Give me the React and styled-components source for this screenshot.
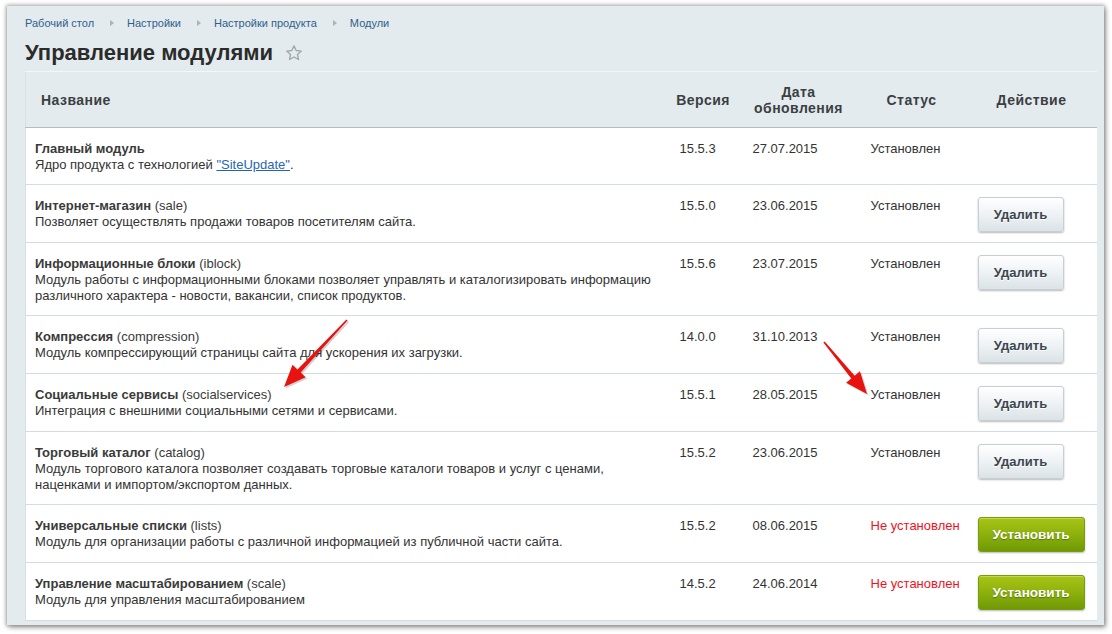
import React from "react";
import styled, { createGlobalStyle } from "styled-components";

const Global = createGlobalStyle`
  html, body { margin: 0; padding: 0; background: #fff; }
  body { font-family: "Liberation Sans", Arial, sans-serif; }
`;

const Outer = styled.div`
  width: 1112px;
  height: 634px;
  padding: 6px 8px 9px 7px;
  box-sizing: border-box;
  position: relative;
`;

const Panel = styled.div`
  height: 619px;
  background: #e3ebee;
  box-shadow: 0 0 4px 1px rgba(0, 0, 0, 0.35), 2px 3px 5px rgba(0, 0, 0, 0.25);
  padding: 9px 8px 0 18px;
  box-sizing: border-box;
  overflow: hidden;
  display: flex;
  flex-direction: column;
`;

const Crumbs = styled.nav`
  display: flex;
  align-items: center;
  height: 16px;
  font-size: 11px;
  color: #2f5f8d;
`;

const Crumb = styled.span`
  white-space: nowrap;
`;

const Sep = styled.span`
  display: inline-block;
  width: 0;
  height: 0;
  border-top: 3px solid transparent;
  border-bottom: 3px solid transparent;
  border-left: 4px solid #a9b3b8;
  margin: 0 13px 0 16px;
`;

const TitleRow = styled.div`
  display: flex;
  align-items: center;
  margin-top: 7px;
  height: 30px;
  gap: 12px;
`;

const Title = styled.h1`
  margin: 0;
  font-size: 22px;
  font-weight: bold;
  color: #2b2b2b;
`;

const Table = styled.table`
  margin-top: 3px;
  width: 1071px;
  border-collapse: collapse;
  background: #fff;
  table-layout: fixed;
  border-left: 1px solid #d7e0e4;
`;

const Th = styled.th`
  background: #e3ebee;
  height: 56px;
  box-sizing: border-box;
  padding: 0 4px;
  font-size: 14px;
  letter-spacing: 0.45px;
  line-height: 16px;
  font-weight: bold;
  color: #3b3f42;
  text-align: ${(p) => (p.$left ? "left" : "center")};
  padding-left: ${(p) => (p.$left ? "15px" : "6px")};
  border-bottom: 1px solid #b4bcc0;
  border-top: 1px solid #f4f7f8;
`;

const Tr = styled.tr`
  border-bottom: 1px solid #d3dcdf;
`;

const Td = styled.td`
  vertical-align: top;
  padding: ${(p) => (p.$btn ? "12px 0 10px 13px" : `13px 0 11px ${p.$pl || 14}px`)};
  font-size: 13px;
  line-height: 16px;
  white-space: ${(p) => (p.$wrap ? "normal" : "nowrap")};
  color: ${(p) => (p.$red ? "#ee1122" : "#333")};
`;

const Name = styled.div`
  font-weight: bold;
  color: #3a3a3a;
`;

const Code = styled.span`
  font-weight: normal;
`;

const Desc = styled.div`
  padding-right: 10px;
`;

const Link = styled.a`
  color: #1f66b8;
  text-decoration: underline;
`;

const Button = styled.button`
  display: block;
  font-family: "Liberation Sans", Arial, sans-serif;
  font-size: ${(p) => (p.$green ? "13.5px" : "13px")};
  font-weight: bold;
  height: 35px;
  border-radius: 3px;
  cursor: pointer;
  padding: 0;
  width: ${(p) => (p.$green ? "107px" : "86px")};
  color: ${(p) => (p.$green ? "#fff" : "#3b4650")};
  text-shadow: ${(p) => (p.$green ? "0 1px 1px rgba(60,80,0,0.6)" : "0 1px 0 #fff")};
  border: 1px solid ${(p) => (p.$green ? "#7a9c10" : "#c6cfd3")};
  background: ${(p) =>
    p.$green
      ? "linear-gradient(to bottom, #a7c416 0%, #8db10c 50%, #6f9906 100%)"
      : "linear-gradient(to bottom, #ffffff 0%, #eef2f4 50%, #dbe3e6 100%)"};
  box-shadow: 0 1px 2px rgba(0, 0, 0, 0.28), inset 0 1px 0 ${(p) => (p.$green ? "#c2d94a" : "#fff")};
`;

const Arrows = styled.svg`
  position: absolute;
  left: 0;
  top: 0;
  pointer-events: none;
`;

const Star = () => (
  <svg width="18" height="18" viewBox="0 0 24 24">
    <path
      d="M12 2.5l2.9 6.2 6.8.7-5.1 4.6 1.5 6.7L12 17.3l-6.1 3.4 1.5-6.7-5.1-4.6 6.8-.7z"
      fill="#e3ebee"
      stroke="#9ca8ae"
      strokeWidth="1.8"
      strokeLinejoin="round"
    />
  </svg>
);

const Arrow = ({ x1, y1, x2, y2 }) => {
  const dx = x2 - x1;
  const dy = y2 - y1;
  const len = Math.hypot(dx, dy);
  const ux = dx / len;
  const uy = dy / len;
  const headLen = 22;
  const headW = 9;
  const bx = x2 - ux * headLen;
  const by = y2 - uy * headLen;
  const px = -uy;
  const py = ux;
  const tail = [x1 + px * 0.8, y1 + py * 0.8, x1 - px * 0.8, y1 - py * 0.8];
  const shaftW = 2.2;
  const pts = [
    [tail[0], tail[1]],
    [bx + px * shaftW, by + py * shaftW],
    [bx + px * headW, by + py * headW],
    [x2, y2],
    [bx - px * headW, by - py * headW],
    [bx - px * shaftW, by - py * shaftW],
    [tail[2], tail[3]],
  ]
    .map((p) => p.join(","))
    .join(" ");
  return (
    <>
      <polygon points={pts} fill="rgba(0,0,0,0.18)" transform="translate(1.5,1.5)" />
      <polygon points={pts} fill="#e8120f" />
    </>
  );
};

const rows = [
  {
    name: "Главный модуль",
    desc: (
      <>
        Ядро продукта с технологией <Link href="#">"SiteUpdate"</Link>.
      </>
    ),
    ver: "15.5.3",
    date: "27.07.2015",
    installed: true,
    system: true,
  },
  { name: "Интернет-магазин", code: "sale", desc: "Позволяет осуществлять продажи товаров посетителям сайта.", ver: "15.5.0", date: "23.06.2015", installed: true },
  {
    name: "Информационные блоки",
    code: "iblock",
    desc: "Модуль работы с информационными блоками позволяет управлять и каталогизировать информацию различного характера - новости, вакансии, список продуктов.",
    ver: "15.5.6",
    date: "23.07.2015",
    installed: true,
  },
  { name: "Компрессия", code: "compression", desc: "Модуль компрессирующий страницы сайта для ускорения их загрузки.", ver: "14.0.0", date: "31.10.2013", installed: true },
  { name: "Социальные сервисы", code: "socialservices", desc: "Интеграция с внешними социальными сетями и сервисами.", ver: "15.5.1", date: "28.05.2015", installed: true },
  {
    name: "Торговый каталог",
    code: "catalog",
    desc: "Модуль торгового каталога позволяет создавать торговые каталоги товаров и услуг с ценами, наценками и импортом/экспортом данных.",
    ver: "15.5.2",
    date: "23.06.2015",
    installed: true,
  },
  { name: "Универсальные списки", code: "lists", desc: "Модуль для организации работы с различной информацией из публичной части сайта.", ver: "15.5.2", date: "08.06.2015", installed: false },
  { name: "Управление масштабированием", code: "scale", desc: "Модуль для управления масштабированием", ver: "14.5.2", date: "24.06.2014", installed: false },
];

export default function App() {
  return (
    <>
      <Global />
      <Outer>
        <Panel>
          <Crumbs>
            <Crumb>Рабочий стол</Crumb>
            <Sep />
            <Crumb>Настройки</Crumb>
            <Sep />
            <Crumb>Настройки продукта</Crumb>
            <Sep />
            <Crumb>Модули</Crumb>
          </Crumbs>
          <TitleRow>
            <Title>Управление модулями</Title>
            <Star />
          </TitleRow>
          <Table>
            <colgroup>
              <col style={{ width: 640 }} />
              <col style={{ width: 73 }} />
              <col style={{ width: 118 }} />
              <col style={{ width: 108 }} />
              <col style={{ width: 132 }} />
            </colgroup>
            <thead>
              <tr>
                <Th $left>Название</Th>
                <Th>Версия</Th>
                <Th>
                  Дата
                  <br />
                  обновления
                </Th>
                <Th>Статус</Th>
                <Th>Действие</Th>
              </tr>
            </thead>
            <tbody>
              {rows.map((r) => (
                <Tr key={r.name}>
                  <Td $pl={9} $wrap>
                    <Name>
                      {r.name}
                      {r.code && <Code> ({r.code})</Code>}
                    </Name>
                    <Desc>{r.desc}</Desc>
                  </Td>
                  <Td>{r.ver}</Td>
                  <Td>{r.date}</Td>
                  <Td $red={!r.installed}>{r.installed ? "Установлен" : "Не установлен"}</Td>
                  <Td $btn>
                    {!r.system &&
                      (r.installed ? <Button>Удалить</Button> : <Button $green>Установить</Button>)}
                  </Td>
                </Tr>
              ))}
            </tbody>
          </Table>
        </Panel>
        <Arrows width="1112" height="634">
          <Arrow x1={347} y1={320} x2={284} y2={387} />
          <Arrow x1={824} y1={342} x2={867} y2={394} />
        </Arrows>
      </Outer>
    </>
  );
}
